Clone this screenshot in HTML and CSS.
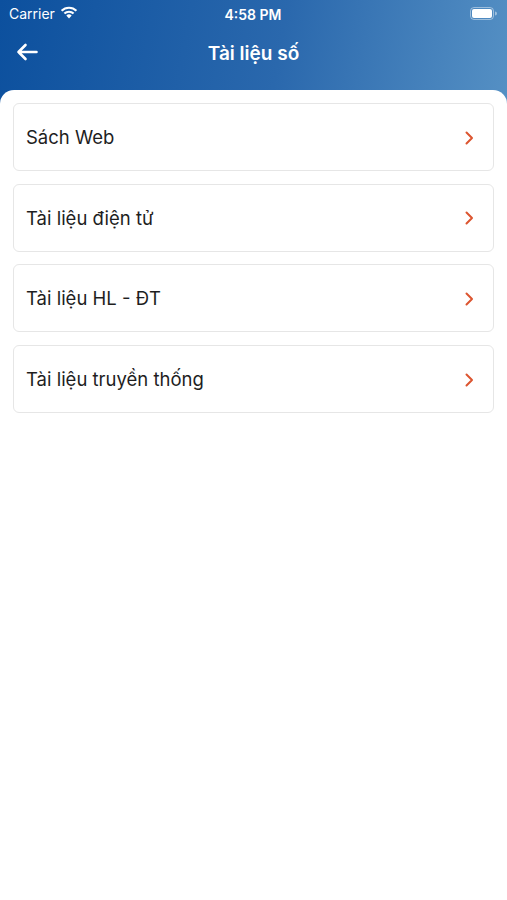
FILE: index.html
```html
<!DOCTYPE html>
<html lang="vi">
<head>
  <meta charset="UTF-8">
  <meta name="viewport" content="width=device-width, initial-scale=1.0">
  <title>Tài liệu số</title>
  <link rel="stylesheet" href="styles.css">
</head>
<body>
  <header class="top">
    <div class="status">
      <span class="carrier">Carrier
        <svg class="wifi" width="18" height="13" viewBox="0 0 18 13">
          <path d="M9 12.5 L6.3 9.6 A4 4 0 0 1 11.7 9.6 Z" fill="#fff"/>
          <path d="M4.4 7.6 A6.6 6.6 0 0 1 13.6 7.6" stroke="#fff" stroke-width="2.1" fill="none"/>
          <path d="M1.6 4.8 A10.4 10.4 0 0 1 16.4 4.8" stroke="#fff" stroke-width="2.1" fill="none"/>
        </svg>
      </span>
      <span class="time">4:58 PM</span>
      <span class="battery">
        <svg width="27" height="13" viewBox="0 0 27 13">
          <rect x="0.5" y="0.5" width="23" height="12" rx="3.5" fill="none" stroke="rgba(255,255,255,0.45)"/>
          <rect x="2" y="2" width="20" height="9" rx="2" fill="#fff"/>
          <path d="M25 4.5 v4 a2 2 0 0 0 0 -4z" fill="rgba(255,255,255,0.45)"/>
        </svg>
      </span>
    </div>
    <div class="navbar">
      <svg class="back" width="22" height="18" viewBox="0 0 22 18">
        <path d="M20.5 9 H2.5 M9.5 2 L2.5 9 L9.5 16" stroke="#fff" stroke-width="2.6" fill="none" stroke-linecap="round" stroke-linejoin="round"/>
      </svg>
      <h1>Tài liệu số</h1>
    </div>
  </header>

  <main class="sheet">
    <a class="item" href="#"><span>Sách Web</span><svg class="chev" width="9" height="14" viewBox="0 0 9 14"><path d="M1.5 1.5 L7 7 L1.5 12.5" stroke="#dc5530" stroke-width="2" fill="none" stroke-linecap="round" stroke-linejoin="round"/></svg></a>
    <a class="item" href="#"><span>Tài liệu điện tử</span><svg class="chev" width="9" height="14" viewBox="0 0 9 14"><path d="M1.5 1.5 L7 7 L1.5 12.5" stroke="#dc5530" stroke-width="2" fill="none" stroke-linecap="round" stroke-linejoin="round"/></svg></a>
    <a class="item" href="#"><span>Tài liệu HL - ĐT</span><svg class="chev" width="9" height="14" viewBox="0 0 9 14"><path d="M1.5 1.5 L7 7 L1.5 12.5" stroke="#dc5530" stroke-width="2" fill="none" stroke-linecap="round" stroke-linejoin="round"/></svg></a>
    <a class="item" href="#"><span>Tài liệu truyền thống</span><svg class="chev" width="9" height="14" viewBox="0 0 9 14"><path d="M1.5 1.5 L7 7 L1.5 12.5" stroke="#dc5530" stroke-width="2" fill="none" stroke-linecap="round" stroke-linejoin="round"/></svg></a>
  </main>
</body>
</html>
```

FILE: styles.css
```css
body { margin: 0; font-family: "Inter", "Noto Sans", sans-serif; background: #fff; }
.top { background: linear-gradient(100deg, #0c509e 0%, #2a68ad 55%, #5590c4 100%); height: 104px; color: #fff; }
.status { display: flex; align-items: center; justify-content: space-between; height: 28px; padding: 0 9px 0 9px; font-size: 14px; }
.carrier { display: flex; align-items: center; gap: 5px; flex: 1; margin-top: -1px; }
.wifi { margin-top: -3px; }
.time { flex: 1; text-align: center; font-weight: 600; }
.battery { flex: 1; display: flex; justify-content: flex-end; margin-top: -2px; padding-right: 1px; }
.navbar { position: relative; height: 48px; display: flex; align-items: center; justify-content: center; }
.back { position: absolute; left: 16px; top: 15px; }
.navbar h1 { margin: 0; font-size: 19px; font-weight: 600; margin-top: 2px; }
.sheet { background: #fff; border-radius: 14px 14px 0 0; margin-top: -14px; padding: 13px 13px; display: flex; flex-direction: column; gap: 12.7px; position: relative; }
.item { box-sizing: border-box; display: flex; align-items: center; justify-content: space-between; height: 68px; padding: 0 19px 0 12px; border: 1px solid #e6e6e6; border-radius: 6px; color: #1e1e1e; text-decoration: none; font-size: 18.5px; }
.chev { margin-top: 1px; }
```
